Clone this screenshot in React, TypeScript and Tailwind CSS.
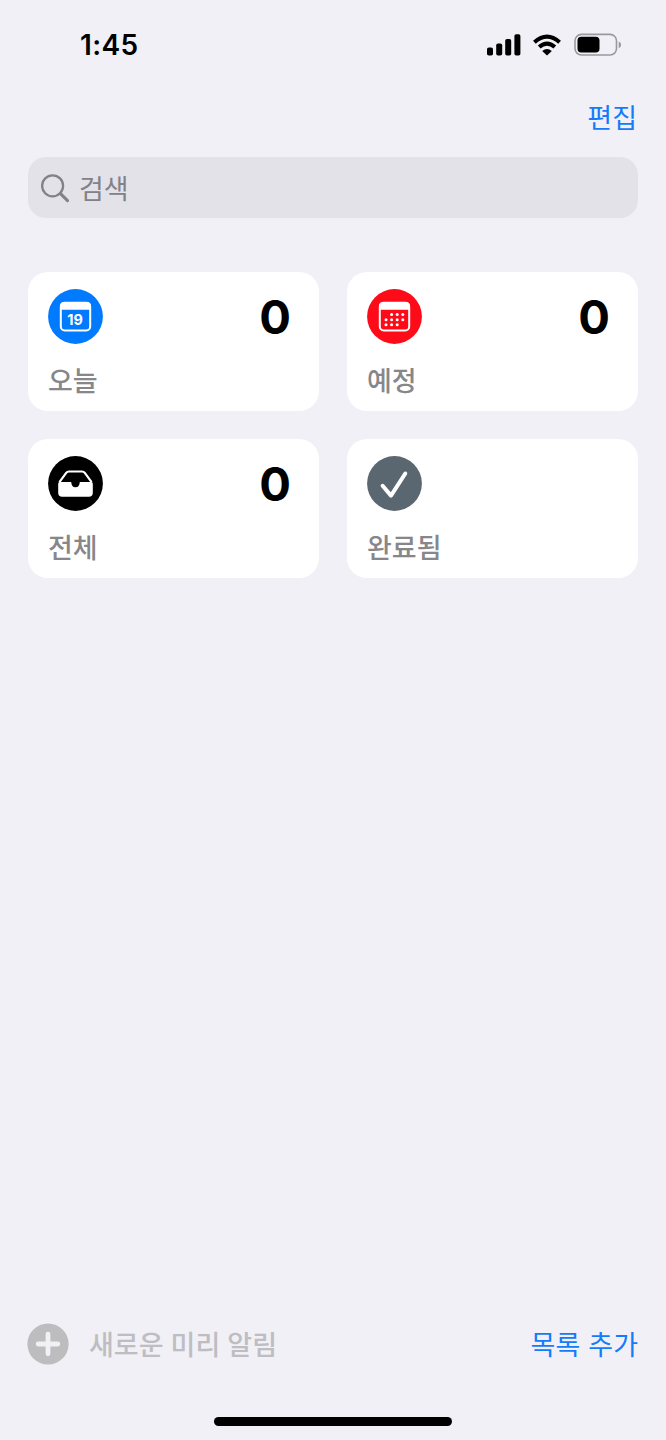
import type { ReactNode } from "react";

const korean = "font-['Noto_Sans_CJK_KR',sans-serif]";

function StatusBar() {
  return (
    <header className="flex h-[88px] items-center justify-between pl-[80px] pr-[44px] pt-px">
      <time className="font-['Inter',sans-serif] text-[28px] font-semibold leading-[34px] tracking-[0.4px]">1:45</time>
      <div className="flex items-center">
        <svg width="34" height="22" viewBox="0 0 34 22" aria-label="Signal">
          <rect x="0" y="13.5" width="6" height="8" rx="1.8" />
          <rect x="9.2" y="9.5" width="6" height="12" rx="1.8" />
          <rect x="18.2" y="5" width="6" height="16.5" rx="1.8" />
          <rect x="27.4" y="0.3" width="6" height="21.2" rx="1.8" />
        </svg>
        <svg className="ml-[12px]" width="28" height="22" viewBox="0 0 28 22" fill="none" stroke="#000" strokeWidth="4.1" aria-label="Wi-Fi">
          <path d="M1.4 8.2Q14 -2.8 26.6 8.2" />
          <path d="M6.2 13Q14 6.3 21.8 13" />
          <path d="M14 21.5 9.2 16.9Q14 12.9 18.8 16.9Z" fill="#000" stroke="none" />
        </svg>
        <svg className="ml-[13px]" width="48" height="24" viewBox="0 0 48 24" aria-label="Battery">
          <rect x="1" y="1.4" width="41.5" height="20.6" rx="6.5" fill="none" stroke="#99999d" strokeWidth="1.6" />
          <rect x="3.5" y="3.8" width="22" height="15.8" rx="3.8" />
          <path d="M44.7 8.4q2.4 1 2.4 3.4t-2.4 3.4Z" fill="#99999d" />
        </svg>
      </div>
    </header>
  );
}

function TodayIcon() {
  return (
    <svg width="55" height="55" viewBox="0 0 55 55">
      <circle cx="27.5" cy="27.5" r="27.4" fill="#007aff" />
      <rect x="12.8" y="13.8" width="29.4" height="27.6" rx="4" fill="none" stroke="#fff" strokeWidth="2" />
      <path d="M12 20.8V17q0-4 4-4h23q4 0 4 4v3.8Z" fill="#fff" />
      <text x="27" y="36" textAnchor="middle" fill="#fff" className="font-['Inter',sans-serif] text-[14.4px] font-bold">19</text>
    </svg>
  );
}

const calendarDots: [number, number][] = [
  [24.6, 25.6], [30.2, 25.6], [35.8, 25.6],
  [19, 30.7], [24.6, 30.7], [30.2, 30.7], [35.8, 30.7],
  [19, 35.7], [24.6, 35.7], [30.2, 35.7],
];

function ScheduledIcon() {
  return (
    <svg width="55" height="55" viewBox="0 0 55 55">
      <circle cx="27.5" cy="27.5" r="27.4" fill="#fe0b19" />
      <rect x="12.8" y="13.8" width="29.4" height="27.6" rx="4" fill="none" stroke="#fff" strokeWidth="2" />
      <path d="M12 20.8V17q0-4 4-4h23q4 0 4 4v3.8Z" fill="#fff" />
      {calendarDots.map(([x, y]) => (
        <circle key={`${x}-${y}`} cx={x} cy={y} r="1.5" fill="#fff" />
      ))}
    </svg>
  );
}

function AllIcon() {
  return (
    <svg width="55" height="55" viewBox="0 0 55 55">
      <circle cx="27.5" cy="27.5" r="27.4" />
      <path d="M11.4 26.2 18.2 16.9q1-1.4 2.8-1.4h13q1.8 0 2.8 1.4l6.8 9.3" fill="none" stroke="#fff" strokeWidth="2.2" />
      <path d="M10.2 28q0-2 1.4-2h11.6q.3 5.3 4.3 5.3t4.3-5.3h11.6q1.4 0 1.4 2v8.7q0 4-4 4h-26.6q-4 0-4-4Z" fill="#fff" />
    </svg>
  );
}

function CompletedIcon() {
  return (
    <svg width="55" height="55" viewBox="0 0 55 55">
      <circle cx="27.5" cy="27.5" r="27.4" fill="#5b6770" />
      <path d="M15.6 29.8 24 39.6 38.3 17.5" fill="none" stroke="#fff" strokeWidth="4" strokeLinecap="round" strokeLinejoin="round" />
    </svg>
  );
}

function Card({ icon, label, count }: { icon: ReactNode; label: string; count?: number }) {
  return (
    <button className="flex h-[139px] flex-col rounded-[20px] bg-white pl-5 pr-[28px] pt-[17px] text-left">
      <span className="flex w-full items-center justify-between">
        {icon}
        {count !== undefined && (
          <span className="font-['Inter',sans-serif] text-[47px] font-bold leading-[55px]">{count}</span>
        )}
      </span>
      <span className={`${korean} mt-[16px] text-[27px] font-medium leading-[40px] text-[#87878b]`}>{label}</span>
    </button>
  );
}

export default function App() {
  return (
    <div className="flex h-[1440px] w-[666px] flex-col bg-[#f1f0f6] text-black">
      <StatusBar />
      <nav className="flex h-[69px] items-start justify-end pr-[29px] pt-[9px]">
        <button className={`${korean} text-[27px] leading-[40px] text-[#147bfa]`}>편집</button>
      </nav>
      <div className="mx-[28px] flex h-[61px] items-center rounded-[18px] bg-[#e3e2e8] pl-[13px]">
        <svg className="mt-px" width="29" height="29" viewBox="0 0 29 29" fill="none" stroke="#828187" strokeLinecap="round">
          <circle cx="11.6" cy="11.8" r="10.5" strokeWidth="2.3" />
          <path d="m19.5 19.6 7 7" strokeWidth="3" />
        </svg>
        <span className={`${korean} ml-[9px] text-[27px] leading-[40px] text-[#828187]`}>검색</span>
      </div>
      <main className="mx-[28px] mt-[54px] grid grid-cols-2 gap-[28px]">
        <Card icon={<TodayIcon />} label="오늘" count={0} />
        <Card icon={<ScheduledIcon />} label="예정" count={0} />
        <Card icon={<AllIcon />} label="전체" count={0} />
        <Card icon={<CompletedIcon />} label="완료됨" />
      </main>
      <footer className="mt-auto">
        <div className="flex h-[42px] items-center justify-between pl-[27px] pr-[28px]">
          <button className="flex items-center">
            <svg width="42" height="42" viewBox="0 0 42 42">
              <circle cx="21" cy="21" r="20.6" fill="#bdbdc0" />
              <path d="M21 11.2v19.6M11.2 21h19.6" stroke="#f1f0f6" strokeWidth="4.8" strokeLinecap="round" />
            </svg>
            <span className={`${korean} ml-[20px] text-[27px] font-medium leading-[40px] text-[#bdbdc2] [word-spacing:1px]`}>새로운 미리 알림</span>
          </button>
          <button className={`${korean} text-[27px] leading-[40px] text-[#147bfa] [word-spacing:2px]`}>목록 추가</button>
        </div>
        <div className="flex h-[75px] items-start justify-center pt-[52px]">
          <div className="h-[9px] w-[238px] rounded-full bg-black" />
        </div>
      </footer>
    </div>
  );
}
